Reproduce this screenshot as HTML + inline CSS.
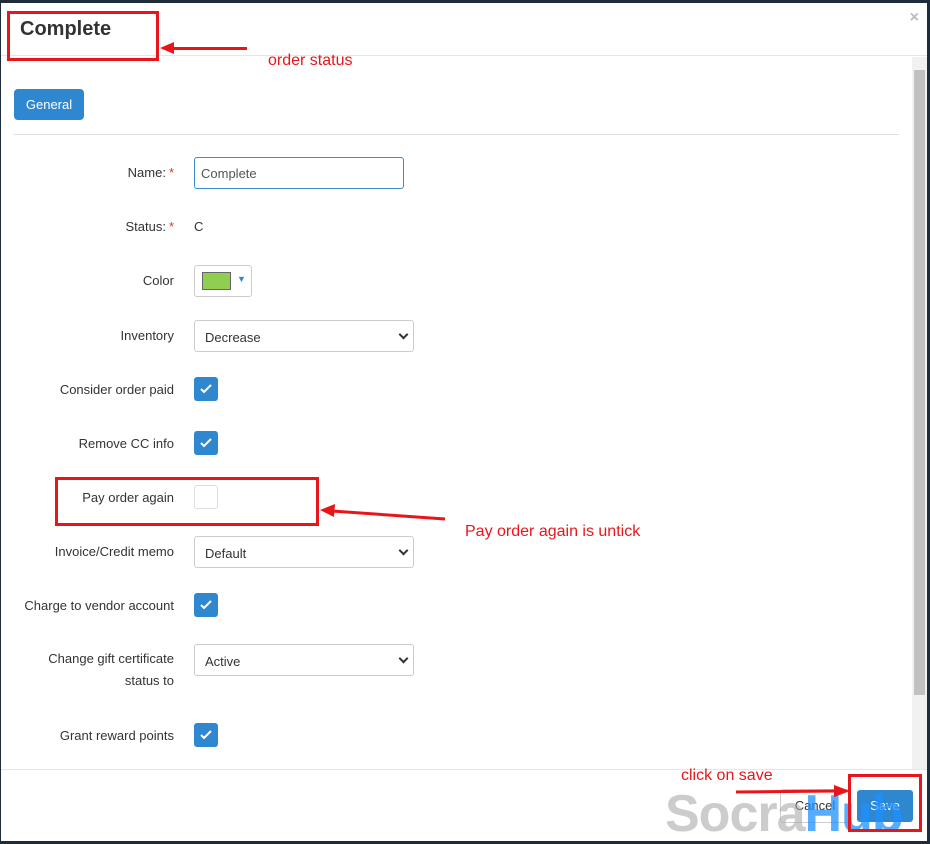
<!DOCTYPE html>
<html><head><style>
body{margin:0;width:930px;height:844px;background:#1e2d3b;font-family:"Liberation Sans",sans-serif;position:relative;overflow:hidden}
.m{position:absolute;left:1px;top:3px;width:926px;height:838px;background:#fff}
.a{position:absolute}
.lbl{position:absolute;right:756px;font-size:13px;color:#333;text-align:right}
.req{color:#e5302f;margin-left:3px}
.cb{position:absolute;left:194px;width:24px;height:24px;border-radius:3px;background:#2f87cf}
.cb svg{position:absolute;left:6px;top:7px}
.sel{position:absolute;left:194px;width:218px;height:30px;border:1px solid #ccc;border-radius:3px;font-size:13px;color:#333;box-sizing:border-box;padding:8px 10px;background:#fff}
.sel:after{content:"";position:absolute;right:6px;top:10px;width:5px;height:5px;border-right:2px solid #333;border-bottom:2px solid #333;transform:rotate(45deg)}
.red{position:absolute;border:3px solid #e8161b;box-sizing:border-box}
.rt{position:absolute;color:#e8161b;font-size:16px}
</style></head><body>
<div class="m">
<div class="a" style="left:19px;top:15px;font-size:20px;font-weight:bold;color:#333">Complete</div>
<div class="a" style="right:8px;top:6px;color:#bbb;font-size:16px;font-weight:bold">×</div>
<div class="a" style="left:0;top:52px;width:926px;height:1px;background:#e5e5e5"></div>
<div class="a" style="left:13px;top:86px;width:70px;height:31px;background:#2f87cf;border-radius:4px;color:#fff;font-size:13px;line-height:31px;text-align:center">General</div>
<div class="a" style="left:13px;top:131px;width:885px;height:1px;background:#e0e0e0"></div>
<div class="a" style="left:911px;top:54px;width:15px;height:712px;background:#f1f1f1"></div>
<div class="a" style="left:913px;top:67px;width:11px;height:625px;background:#c1c1c1"></div>
<div class="a" style="left:0;top:766px;width:926px;height:1px;background:#e5e5e5"></div>
</div>
<div class="lbl" style="top:165px">Name:<span class="req">*</span></div>
<div class="a" style="left:194px;top:157px;width:210px;height:32px;border:1px solid #3b8dd0;border-radius:3px;box-sizing:border-box;padding:8px 6px;font-size:13px;color:#555">Complete</div>
<div class="lbl" style="top:219px">Status:<span class="req">*</span></div>
<div class="a" style="left:194px;top:219px;font-size:13px;color:#333">C</div>
<div class="lbl" style="top:273px">Color</div>
<div class="a" style="left:194px;top:265px;width:58px;height:32px;border:1px solid #ccc;border-radius:3px;box-sizing:border-box"><div class="a" style="left:7px;top:6px;width:29px;height:18px;background:#8fcf4f;border:1px solid #666;box-sizing:border-box"></div><div class="a" style="left:42px;top:8px;font-size:9px;color:#2f87cf">▼</div></div>
<div class="lbl" style="top:328px">Inventory</div>
<div class="sel" style="top:320px;width:220px;height:32px;padding:9px 10px">Decrease</div>
<div class="lbl" style="top:382px">Consider order paid</div>
<div class="cb" style="top:377px"><svg width="12" height="10"><path d="M1 5l3 3 7-7" stroke="#fff" stroke-width="2" fill="none"/></svg></div>
<div class="lbl" style="top:436px">Remove CC info</div>
<div class="cb" style="top:431px"><svg width="12" height="10"><path d="M1 5l3 3 7-7" stroke="#fff" stroke-width="2" fill="none"/></svg></div>
<div class="lbl" style="top:490px">Pay order again</div>
<div class="a" style="left:194px;top:485px;width:24px;height:24px;border:1px solid #ddd;border-radius:3px;box-sizing:border-box"></div>
<div class="lbl" style="top:544px">Invoice/Credit memo</div>
<div class="sel" style="top:536px;width:220px;height:32px;padding:9px 10px">Default</div>
<div class="lbl" style="top:598px">Charge to vendor account</div>
<div class="cb" style="top:593px"><svg width="12" height="10"><path d="M1 5l3 3 7-7" stroke="#fff" stroke-width="2" fill="none"/></svg></div>
<div class="lbl" style="top:648px;line-height:22px">Change gift certificate<br>status to</div>
<div class="sel" style="top:644px;width:220px;height:32px;padding:9px 10px">Active</div>
<div class="lbl" style="top:728px">Grant reward points</div>
<div class="cb" style="top:723px"><svg width="12" height="10"><path d="M1 5l3 3 7-7" stroke="#fff" stroke-width="2" fill="none"/></svg></div>
<div class="a" style="left:780px;top:789px;width:68px;height:32px;border:1px solid #ccc;border-radius:3px;font-size:13px;color:#333;text-align:center;line-height:32px">Cancel</div>
<div class="a" style="left:857px;top:790px;width:56px;height:32px;background:#2f87cf;border-radius:3px;font-size:13px;color:#fff;text-align:center;line-height:32px">Save</div>
<div class="a" style="left:665px;top:784px;font-size:52px;font-weight:bold;color:rgba(170,170,170,.6);letter-spacing:-1px;line-height:60px">Socra<span style="color:rgba(30,144,255,.75)">Hub</span></div>
<div class="red" style="left:7px;top:11px;width:152px;height:50px"></div>
<div class="a" style="left:172px;top:47px;width:75px;height:3px;background:#e8161b"></div>
<div class="a" style="left:160px;top:42px;border-right:14px solid #e8161b;border-top:6px solid transparent;border-bottom:6px solid transparent"></div>
<div class="rt" style="left:268px;top:52px">order status</div>
<div class="red" style="left:55px;top:477px;width:264px;height:49px"></div>
<svg class="a" style="left:318px;top:503px" width="130" height="20"><path d="M14 8L127 16" stroke="#e8161b" stroke-width="3"/><path d="M2 7l15-6-1 13z" fill="#e8161b"/></svg>
<div class="rt" style="left:465px;top:523px">Pay order again is untick</div>
<div class="rt" style="left:681px;top:767px">click on save</div>
<svg class="a" style="left:734px;top:782px" width="120" height="20"><path d="M2 10L104 9" stroke="#e8161b" stroke-width="3"/><path d="M100 3l16 6-16 6z" fill="#e8161b"/></svg>
<div class="red" style="left:848px;top:774px;width:74px;height:58px"></div>
</body></html>
